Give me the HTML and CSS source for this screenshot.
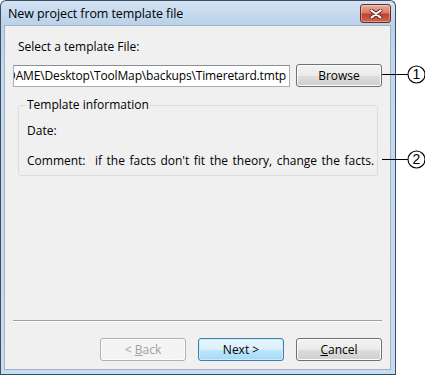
FILE: index.html
```html
<!DOCTYPE html>
<html>
<head>
<meta charset="utf-8">
<link rel="stylesheet" href="styles.css">
</head>
<body>
<div class="stage">
  <div class="window">
    <div class="titlebar">
      <span class="title">New project from template file</span>
      <div class="close">
        <svg width="14" height="10" viewBox="0 0 14 10"><path d="M2.5 1.5 L11.5 8.5 M11.5 1.5 L2.5 8.5" stroke="#5a1f16" stroke-width="3.6" stroke-linecap="round"/><path d="M2.5 1.5 L11.5 8.5 M11.5 1.5 L2.5 8.5" stroke="#fff" stroke-width="2.2" stroke-linecap="round"/></svg>
      </div>
    </div>
    <div class="client">
      <div class="label">Select a template File:</div>
      <div class="filerow">
        <div class="input"><span>C:\Users\MADAME\Desktop\ToolMap\backups\Timeretard.tmtp</span></div>
        <button class="btn">Browse</button>
      </div>
      <fieldset class="group">
        <legend>Template information</legend>
        <div class="info-row">Date:</div>
        <div class="info-row"><span class="key">Comment:</span><span class="value">if the facts don't fit the theory, change the facts.</span></div>
      </fieldset>
      <div class="spacer"></div>
      <div class="separator"></div>
      <div class="buttons">
        <button class="btn disabled">&lt; <u>B</u>ack</button>
        <button class="btn default">Next &gt;</button>
        <button class="btn"><u>C</u>ancel</button>
      </div>
    </div>
  </div>
  <div class="callout c1"><span class="line"></span><svg width="19" height="19" viewBox="0 0 19 19"><circle cx="9.5" cy="9.5" r="8.5" fill="#fff" stroke="#000" stroke-width="1.1"/><text x="9.5" y="14.2" text-anchor="middle" font-family="Liberation Sans, Arial, sans-serif" font-size="14">1</text></svg></div>
  <div class="callout c2"><span class="line"></span><svg width="19" height="19" viewBox="0 0 19 19"><circle cx="9.5" cy="9.5" r="8.5" fill="#fff" stroke="#000" stroke-width="1.1"/><text x="9.5" y="14.2" text-anchor="middle" font-family="Liberation Sans, Arial, sans-serif" font-size="14">2</text></svg></div>
</div>
</body>
</html>
```

FILE: styles.css
```css
* { box-sizing: border-box; }
html, body { margin: 0; padding: 0; background: #fff; }
body { font-family: "Open Sans", "Noto Sans", sans-serif; font-size: 12px; color: #000; }

.stage { position: relative; width: 425px; height: 376px; }

.window {
  width: 396px;
  height: 375px;
  border: 1px solid #3b4e63;
  border-bottom-color: #1f5566;
  border-radius: 6px 6px 0 0;
  background: linear-gradient(#d3e3f3, #b9d1ea 24px, #c3d7ee 60px, #c8dbef);
  padding: 0 4px 4px 3px;
  display: flex;
  flex-direction: column;
}

.titlebar {
  height: 24px;
  display: flex;
  align-items: center;
  justify-content: space-between;
  padding-left: 4px;
}
.title { font-size: 12.5px; letter-spacing: -0.1px; color: #000; }

.close {
  width: 31px;
  height: 19px;
  margin-top: 1px;
  border: 1px solid #6d2b27;
  border-radius: 3px;
  background: linear-gradient(#e8b0a2, #d67a68 45%, #c1412b 55%, #cc6a4f);
  display: flex;
  align-items: center;
  justify-content: center;
  box-shadow: inset 0 0 0 1px rgba(255,255,255,0.35);
}

.client {
  flex: 1;
  background: #f0f0f0;
  border: 1px solid #a0b4c8;
  display: flex;
  flex-direction: column;
  padding: 13px 8px 8px 8px;
}

.label { padding-left: 5px; line-height: 16px; height: 16px; }

.filerow {
  display: flex;
  align-items: center;
  gap: 6px;
  margin-top: 9px;
}
.input {
  width: 277px;
  height: 22px;
  background: #fff;
  border: 1px solid #abadb3;
  border-top-color: #8a8e96;
  display: flex;
  justify-content: flex-end;
  align-items: center;
  overflow: hidden;
  white-space: nowrap;
  padding-right: 3px;
  letter-spacing: -0.15px;
}

.btn {
  font-family: inherit;
  font-size: 12px;
  color: #000;
  width: 86px;
  height: 23px;
  padding: 0;
  border: 1px solid #707070;
  border-radius: 3px;
  background: linear-gradient(#f2f2f2, #ebebeb 50%, #dddddd 51%, #cfcfcf);
  box-shadow: inset 0 0 0 1px #fcfcfc;
}
.btn u { text-decoration: underline; }
.btn.disabled {
  color: #a0a0a0;
  border-color: #adb2b5;
  background: #f4f4f4;
}
.btn.default {
  border-color: #3c7fb1;
  background: linear-gradient(#eaf6fd, #d9f0fc 50%, #bee6fd 51%, #a7d9f5);
  box-shadow: inset 0 0 0 1px #cdeaf9;
}

.group {
  margin: 11px 4px 0 5px;
  padding: 0 0 6px 8px;
  border: 1px solid #dcdcdc;
  border-radius: 3px;
  height: 78px;
  min-width: 0;
  width: 360px;
}
.group legend {
  padding: 0 1px;
  margin-left: -1px;
  line-height: 14px;
}
.info-row {
  display: flex;
  line-height: 16px;
  margin-top: 11px;
  white-space: nowrap;
}
.info-row + .info-row { margin-top: 14px; }
.key { width: 68px; flex: none; }
.value { word-spacing: 1.4px; }

.spacer { flex: 1; }

.separator {
  height: 2px;
  border-top: 1px solid #a0a0a0;
  border-bottom: 1px solid #fff;
}

.buttons {
  display: flex;
  justify-content: flex-end;
  gap: 12px;
  margin-top: 16px;
}

.callout {
  position: absolute;
  display: flex;
  align-items: center;
  left: 382px;
}
.callout .line { width: 26px; height: 1px; background: #000; }
.callout svg { margin-left: -1px; }
.c1 { top: 65px; }
.c2 { top: 150px; }
```
